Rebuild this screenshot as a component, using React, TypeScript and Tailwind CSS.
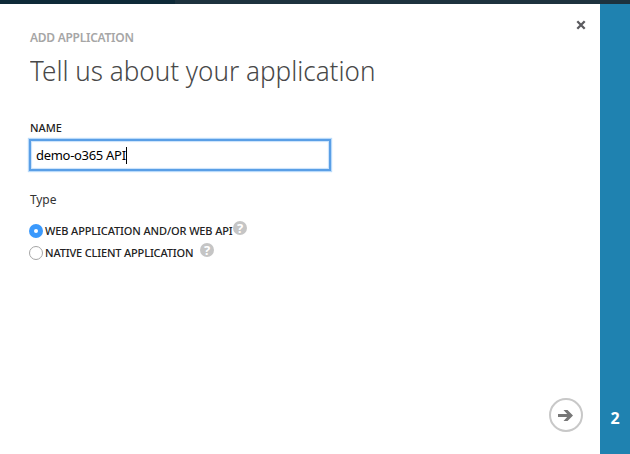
import React from 'react';

function Help({ className }: { className: string }) {
  return (
    <span className={`flex size-[14px] shrink-0 items-center justify-center rounded-full bg-[#c5c5c5] text-[13px] leading-none font-bold text-white ${className}`}>?</span>
  );
}

function Radio({ checked }: { checked?: boolean }) {
  return checked ? (
    <span className="flex size-[14px] shrink-0 items-center justify-center rounded-full bg-[#3b99fc]">
      <span className="size-[4px] rounded-full bg-white" />
    </span>
  ) : (
    <span className="size-[14px] shrink-0 rounded-full border border-[#a5a5a5] bg-white" />
  );
}

export default function App() {
  return (
    <div className="flex h-[454px] w-[630px] flex-col overflow-hidden bg-white font-['Noto_Sans',sans-serif] whitespace-nowrap">
      <div className="flex h-1 shrink-0 bg-[#1d323e]">
        <div className="w-[175px] bg-[#0e2a38]" />
      </div>
      <div className="flex flex-1">
        <main className="flex w-[600px] flex-col pl-[30px]">
          <header className="flex h-[48px] justify-between pr-[14px]">
            <span className="mt-[26px] text-[12px] leading-4 font-semibold tracking-[-0.27px] text-[#a6a6a6]">ADD APPLICATION</span>
            <svg className="mt-[16px] size-[10px]" viewBox="0 0 10 10">
              <path d="M1.3 1.3l7.4 7.4M8.7 1.3L1.3 8.7" stroke="#5b5b5f" strokeWidth="2.3" />
            </svg>
          </header>
          <h1 className="h-[68px] w-[372px] origin-left scale-x-[0.93] text-[28px] leading-[36px] font-light text-[#484848]">Tell us about your application</h1>
          <span className="h-[16px] text-[11px] leading-4 font-medium text-[#222]">NAME</span>
          <div className="mt-[3px] -ml-px flex h-[32px] w-[302px] shrink-0 items-center border-2 border-[#5a9fe6] pt-px pl-[5px] text-[13px] tracking-[-0.3px] text-black shadow-[0_0_1px_1px_#b9dafa,inset_0_0_1px_1px_#c8e2fb]">
            demo-o365 API
            <span className="h-[17px] w-px bg-black" />
          </div>
          <span className="mt-[20px] h-[16px] text-[12px] leading-[17px] tracking-[-0.1px] text-[#333]">Type</span>
          <div className="mt-[13px] -ml-px flex h-[22px] items-center">
            <Radio checked />
            <span className="ml-[2px] w-[188px] text-[11px] font-medium tracking-[-0.12px] text-[#222]">WEB APPLICATION AND/OR WEB API</span>
            <Help className="mb-[6px]" />
          </div>
          <div className="-ml-px flex h-[22px] items-center">
            <Radio />
            <span className="ml-[2px] w-[155px] text-[11px] font-medium tracking-[-0.16px] text-[#222]">NATIVE CLIENT APPLICATION</span>
            <Help className="mb-[6px]" />
          </div>
          <div className="mt-auto mb-[22px] flex justify-end pr-[17px]">
            <svg className="size-[34px]" viewBox="0 0 34 34" fill="none">
              <circle cx="17" cy="17" r="16" stroke="#c8c8c8" strokeWidth="2" />
              <path d="M9 17.5H21" stroke="#777" strokeWidth="3" />
              <path d="M14.5 12H18.5L24 17.5L18.500 23H14.500L19.500 17.500Z" fill="#777" />
            </svg>
          </div>
        </main>
        <aside className="flex flex-1 items-end justify-center bg-[#1f82b0] pb-[25px] text-[16px] leading-[22px] font-bold text-white">2</aside>
      </div>
    </div>
  );
}
